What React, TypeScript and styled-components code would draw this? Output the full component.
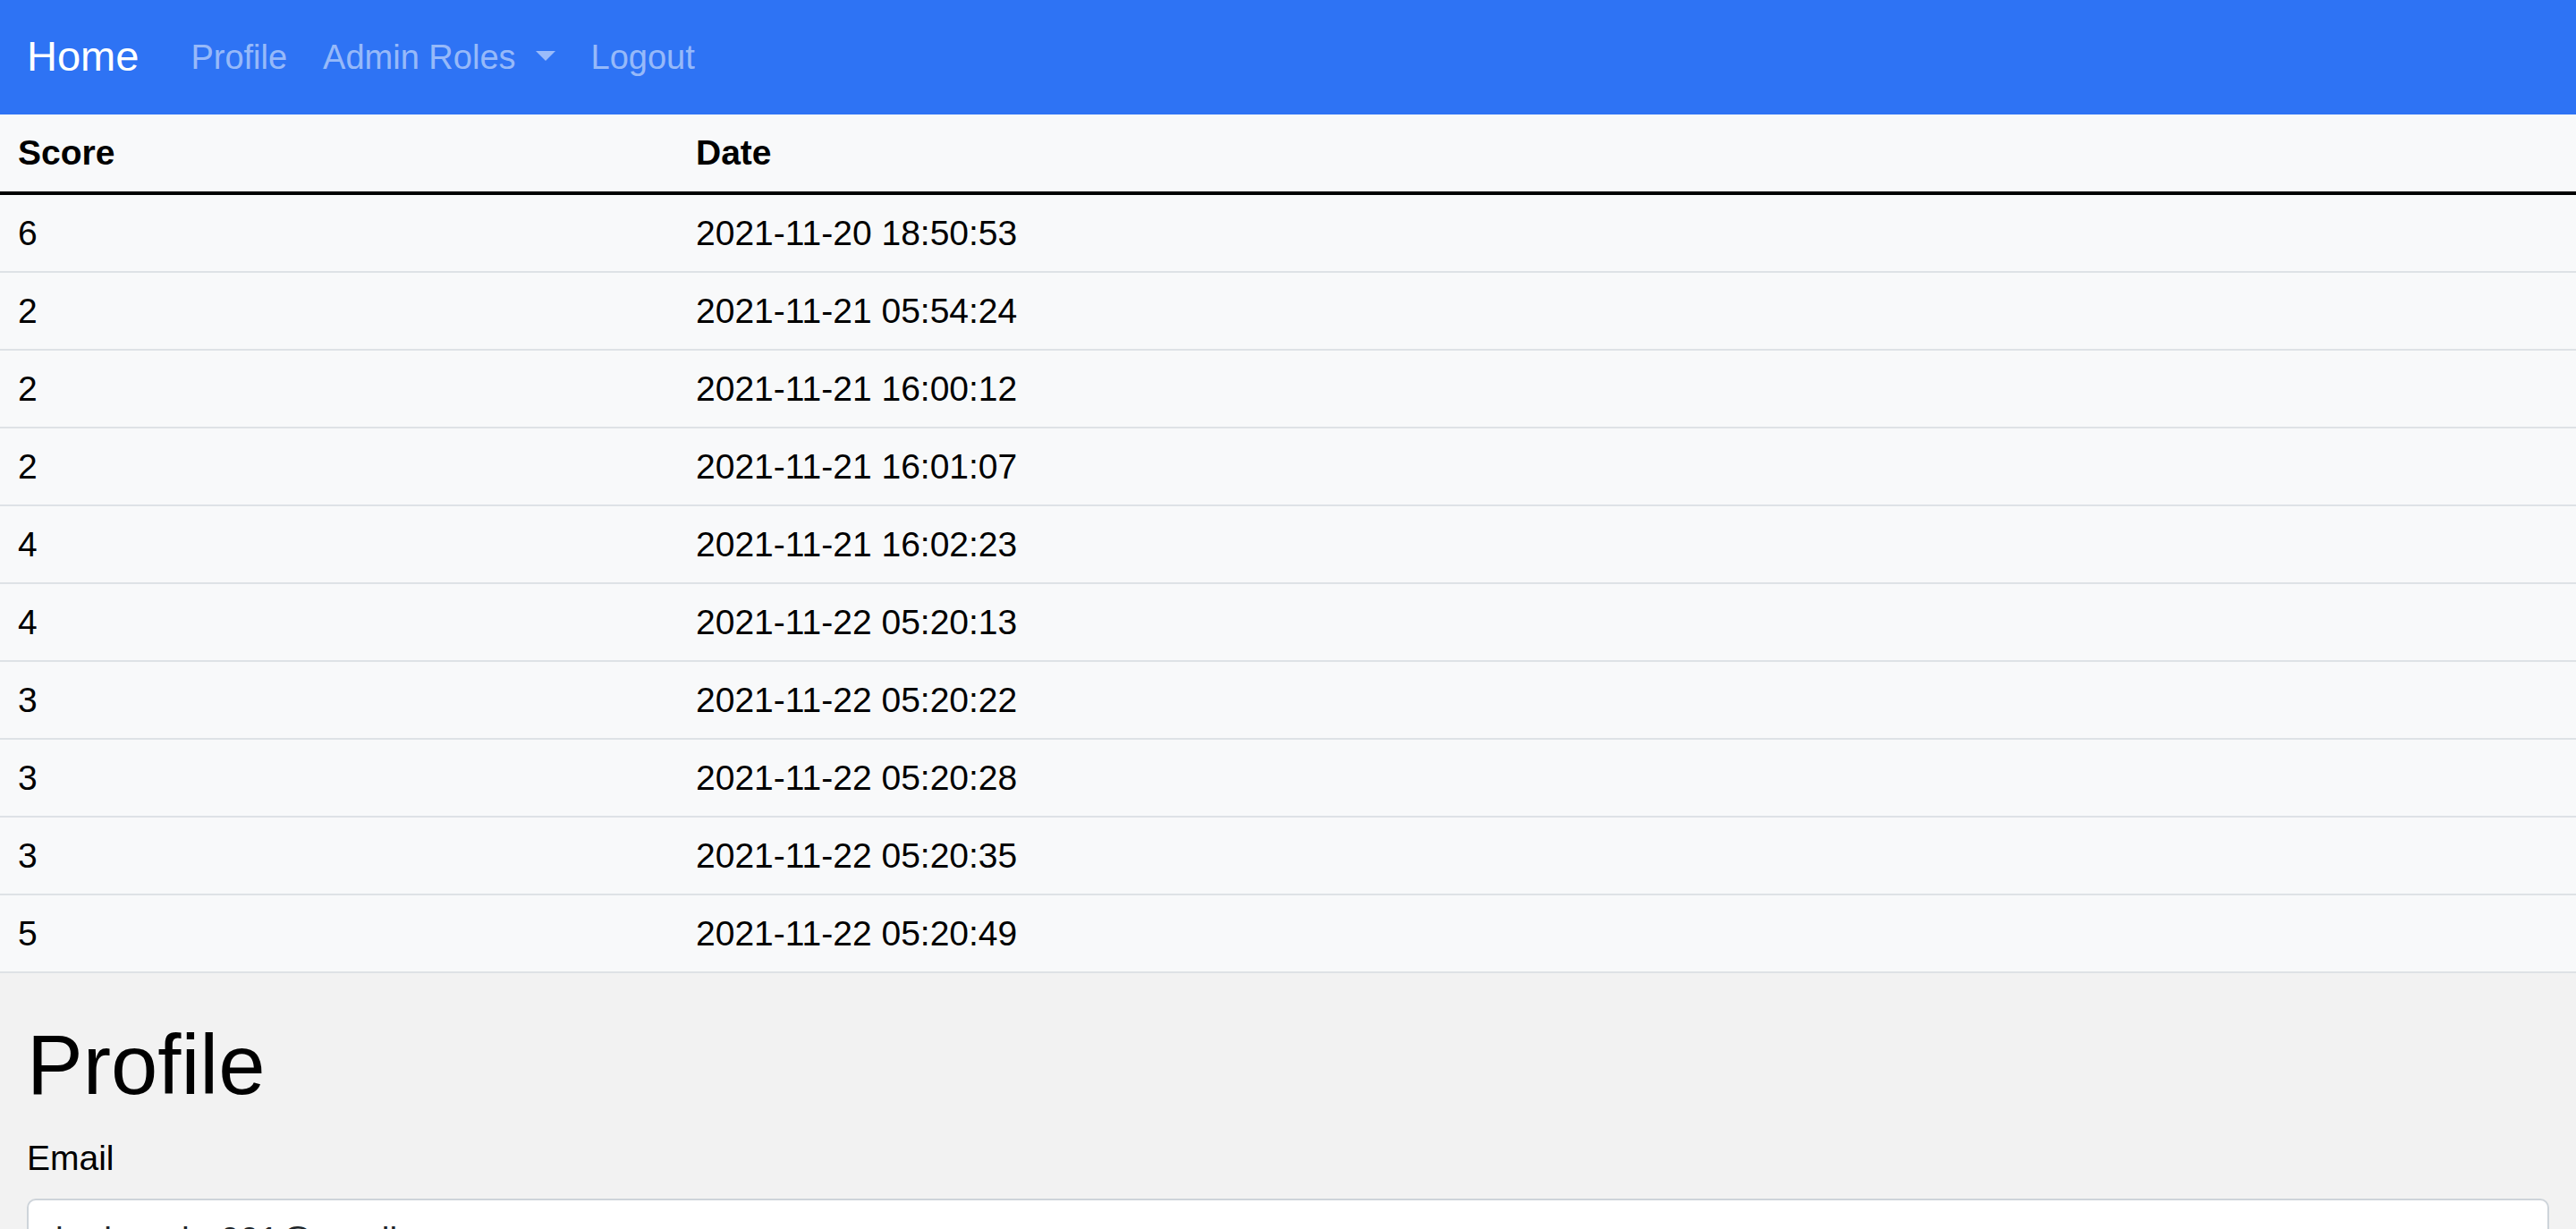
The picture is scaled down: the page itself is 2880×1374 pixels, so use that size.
import React from "react";
import styled, { createGlobalStyle } from "styled-components";

const GlobalStyle = createGlobalStyle`
  html, body {
    margin: 0;
    padding: 0;
    background: #f2f2f2;
    color: #000;
    font-family: "Liberation Sans", Arial, Helvetica, sans-serif;
  }
  * { box-sizing: border-box; }
`;

const Navbar = styled.nav`
  display: flex;
  align-items: center;
  height: 128px;
  padding: 0 30px;
  background: #2e73f4;
`;

const Brand = styled.a`
  font-size: 47px;
  line-height: 1;
  color: #fff;
  margin-right: 38px;
  margin-top: -4px;
  text-decoration: none;
`;

const NavList = styled.ul`
  display: flex;
  align-items: center;
  list-style: none;
  margin: 0;
  padding: 0;
`;

const NavLink = styled.a`
  display: flex;
  align-items: center;
  padding: 0 20px;
  font-size: 38px;
  line-height: 1.5;
  color: rgba(255, 255, 255, 0.52);
  text-decoration: none;
`;

const Caret = styled.span`
  display: inline-block;
  margin-left: 22px;
  margin-top: -4px;
  border-top: 11px solid currentColor;
  border-left: 11px solid transparent;
  border-right: 11px solid transparent;
`;

const Table = styled.table`
  width: 100%;
  border-collapse: separate;
  border-spacing: 0;
  background: #f8f9fa;
`;

const HeadCell = styled.th<{ $w?: number }>`
  text-align: left;
  font-weight: 700;
  font-size: 39px;
  height: 90px;
  padding: 0 20px;
  border-bottom: 4px solid #000;
  width: ${(p) => (p.$w ? `${p.$w}px` : "auto")};
`;

const Cell = styled.td`
  font-size: 39px;
  height: 87px;
  padding: 0 20px;
  border-bottom: 2px solid #dee2e6;
  vertical-align: middle;
`;

const Section = styled.main`
  padding: 47px 30px 0;
`;

const Title = styled.h1`
  margin: 0 0 18px;
  font-size: 94px;
  font-weight: 500;
  line-height: 1.2;
`;

const Label = styled.label`
  display: block;
  font-size: 39px;
  line-height: 1.5;
  margin-bottom: 16px;
`;

const Input = styled.input`
  display: block;
  width: 100%;
  padding: 15px 30px;
  font-family: inherit;
  font-size: 39px;
  line-height: 1.5;
  color: #212529;
  background: #fff;
  border: 2px solid #ced4da;
  border-radius: 10px;
`;

const rows: [number, string][] = [
  [6, "2021-11-20 18:50:53"],
  [2, "2021-11-21 05:54:24"],
  [2, "2021-11-21 16:00:12"],
  [2, "2021-11-21 16:01:07"],
  [4, "2021-11-21 16:02:23"],
  [4, "2021-11-22 05:20:13"],
  [3, "2021-11-22 05:20:22"],
  [3, "2021-11-22 05:20:28"],
  [3, "2021-11-22 05:20:35"],
  [5, "2021-11-22 05:20:49"],
];

export default function App() {
  return (
    <>
      <GlobalStyle />
      <Navbar>
        <Brand href="#">Home</Brand>
        <NavList>
          <li><NavLink href="#">Profile</NavLink></li>
          <li><NavLink href="#">Admin Roles<Caret /></NavLink></li>
          <li><NavLink href="#">Logout</NavLink></li>
        </NavList>
      </Navbar>
      <Table>
        <thead>
          <tr>
            <HeadCell $w={758}>Score</HeadCell>
            <HeadCell>Date</HeadCell>
          </tr>
        </thead>
        <tbody>
          {rows.map(([s, d], i) => (
            <tr key={i}>
              <Cell>{s}</Cell>
              <Cell>{d}</Cell>
            </tr>
          ))}
        </tbody>
      </Table>
      <Section>
        <Title>Profile</Title>
        <Label htmlFor="email">Email</Label>
        <Input id="email" type="email" defaultValue="kodeender001@gmail.com" readOnly />
      </Section>
    </>
  );
}
